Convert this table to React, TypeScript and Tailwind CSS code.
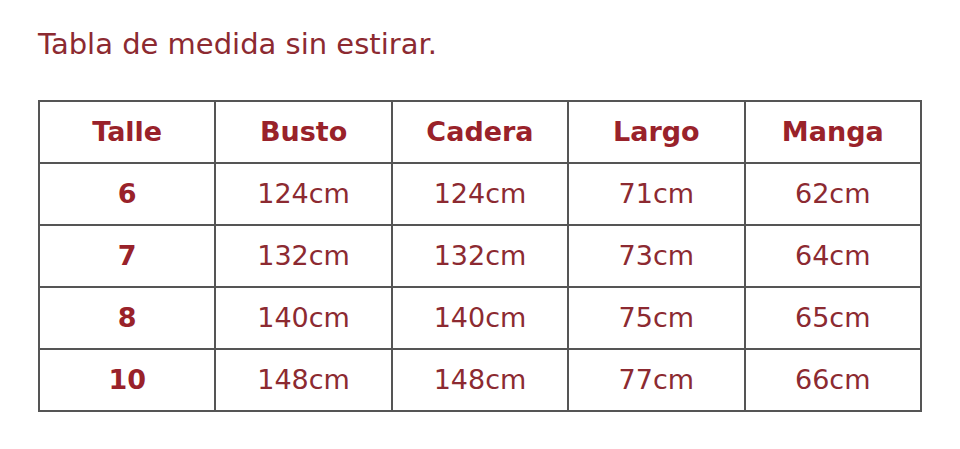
const rows = [
  ["6", "124cm", "124cm", "71cm", "62cm"],
  ["7", "132cm", "132cm", "73cm", "64cm"],
  ["8", "140cm", "140cm", "75cm", "65cm"],
  ["10", "148cm", "148cm", "77cm", "66cm"],
];

const headers = ["Talle", "Busto", "Cadera", "Largo", "Manga"];

export default function App() {
  return (
    <div
      className="w-[960px] h-[449px] bg-white overflow-hidden"
      style={{ fontFamily: '"DejaVu Sans", sans-serif' }}
    >
      <h1 className="pl-[38px] pt-[26px] text-[29px] leading-[36px] text-[#8c2a31] font-normal">
        Tabla de medida sin estirar.
      </h1>
      <table className="ml-[38px] mt-[38px] w-[884px] border-collapse table-fixed">
        <thead>
          <tr className="h-[62px]">
            {headers.map((h) => (
              <th
                key={h}
                className="border-2 border-[#555555] text-[27px] font-bold text-[#99222a] text-center"
              >
                {h}
              </th>
            ))}
          </tr>
        </thead>
        <tbody>
          {rows.map((r) => (
            <tr key={r[0]} className="h-[62px]">
              {r.map((c, i) => (
                <td
                  key={i}
                  className={
                    "border-2 border-[#555555] text-[27px] text-center " +
                    (i === 0 ? "font-bold text-[#99222a]" : "text-[#8c2a31]")
                  }
                >
                  {c}
                </td>
              ))}
            </tr>
          ))}
        </tbody>
      </table>
    </div>
  );
}
